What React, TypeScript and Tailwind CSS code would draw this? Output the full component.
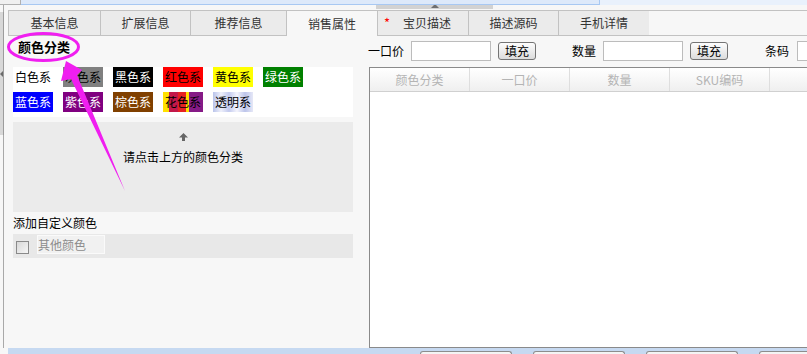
import React from 'react';

const swatches = [
  [
    { name: '白色系', bg: 'bg-white', text: 'text-black' },
    { name: '灰色系', bg: 'bg-[#808080]', text: 'text-black' },
    { name: '黑色系', bg: 'bg-black', text: 'text-white' },
    { name: '红色系', bg: 'bg-[#ff0000]', text: 'text-black' },
    { name: '黄色系', bg: 'bg-[#ffff00]', text: 'text-black' },
    { name: '绿色系', bg: 'bg-[#008000]', text: 'text-white' },
  ],
  [
    { name: '蓝色系', bg: 'bg-[#0000ff]', text: 'text-white' },
    { name: '紫色系', bg: 'bg-[#800080]', text: 'text-white' },
    { name: '棕色系', bg: 'bg-[#804000]', text: 'text-white' },
    {
      name: '花色系',
      bg: 'bg-[linear-gradient(90deg,#ffe000_0%,#ffe000_14%,#c3184a_14%,#c3184a_38%,#e52222_38%,#e52222_58%,#ffe000_58%,#ffe000_66%,#861a86_66%,#861a86_100%)]',
      text: 'text-black',
    },
    {
      name: '透明系',
      bg: 'bg-[linear-gradient(90deg,#b9c3ea_0%,#eef0fb_20%,#c3caee_40%,#f4f4fc_60%,#bcc4ea_80%,#e6e8f7_100%)]',
      text: 'text-black',
    },
  ],
];

const tabs = [
  { label: '基本信息', w: 'w-[93px] border-l' },
  { label: '扩展信息', w: 'w-[90px]' },
  { label: '推荐信息', w: 'w-[96px]' },
  { label: '销售属性', w: 'w-[91px]', active: true },
  { label: '宝贝描述', w: 'w-[91px]', star: true },
  { label: '描述源码', w: 'w-[90px]' },
  { label: '手机详情', w: 'w-[90px] border-r-0' },
];

const columns = ['颜色分类', '一口价', '数量', 'SKU编码', ''];

const FillButton: React.FC = () => (
  <button className="w-[38px] h-[18px] rounded-[3px] border border-[#747474] bg-[linear-gradient(#fdfdfd,#dcdcdc)] text-[12px] leading-[16px] text-black">
    填充
  </button>
);

const App: React.FC = () => {
  return (
    <div className="relative w-[807px] h-[354px] overflow-hidden bg-[#f7f7f7] text-[12px] text-[#222] font-['Noto_Sans_CJK_SC','Noto_Sans',sans-serif] flex flex-col">
      {/* top strip */}
      <div className="h-[5px] flex">
        <div className="w-[21px] shrink-0 h-[5px] bg-[#f0f0f0] border-r border-b border-[#b0b0b0]" />
        <div className="w-[579px] shrink-0 h-[5px] bg-[#dde9fa] border-r border-b border-[#a8c8f2]" />
        <div className="flex-1 h-[5px] bg-[#e9f1fc]" />
      </div>

      <div className="h-[343px] flex">
        {/* left gutter */}
        <div className="w-[8px] shrink-0 flex flex-col">
          <div className="w-[4px] h-[7px] border-r border-[#a9a9a9]" />
          <div className="w-[4px] h-[123px] bg-[#d8d8d8] border-r border-[#9c9c9c] flex flex-col pt-[59px]">
            <div className="w-0 h-0 border-y-[3px] border-y-transparent border-r-[3px] border-r-[#6a6a6a]" />
          </div>
          <div className="w-[4px] flex-1 border-r border-[#a9a9a9]" />
        </div>

        {/* main */}
        <div className="flex-1 min-w-0 overflow-hidden flex flex-col">
          <div className="h-[5px] pl-[368px]">
            <div className="w-[117px] h-[4px] bg-[#d2d2d2] flex justify-center">
              <div className="w-0 h-0 -mt-[1px] border-x-[4px] border-x-transparent border-b-[4px] border-b-[#707070]" />
            </div>
          </div>

          {/* tabs */}
          <div className="h-[26px] flex border-t border-[#c2c2c2]">
            {tabs.map((t) => (
              <div
                key={t.label}
                className={`${t.w} shrink-0 h-full border-r border-[#c2c2c2] flex items-center text-[12px] text-[#333] ${
                  t.active ? 'bg-[#f7f7f7]' : 'bg-[#ebebeb] border-b'
                } ${t.star ? 'pl-[6px]' : 'justify-center'}`}
              >
                {t.star && <span className="text-[#ff0000] mr-[13px] text-[13px]">*</span>}
                {t.label}
              </div>
            ))}
            <div className="flex-1 h-full border-b border-[#c2c2c2]" />
          </div>

          {/* content */}
          <div className="h-[312px] flex">
            {/* left panel */}
            <div className="w-[345px] shrink-0 pl-[5px] flex flex-col">
              <div className="h-[31px] pl-[5px] leading-[21px] text-[13px] font-bold text-black">颜色分类</div>
              <div className="bg-white flex flex-col gap-[5px] pb-[5px]">
                {swatches.map((row, i) => (
                  <div key={i} className="flex gap-[10px]">
                    {row.map((s) => (
                      <div key={s.name} className={`w-[40px] h-[20px] ${s.bg} ${s.text} text-[12px] leading-[20px] pl-[2px]`}>
                        {s.name}
                      </div>
                    ))}
                  </div>
                ))}
              </div>
              <div className="mt-[5px] h-[90px] bg-[#ebebeb] flex flex-col items-center pt-[11px]">
                <svg width="9" height="8" viewBox="0 0 9 8">
                  <path d="M4.5 0 L9 4.5 L6 4.5 L6 8 L3 8 L3 4.5 L0 4.5 Z" fill="#666" />
                </svg>
                <div className="mt-[9px] leading-[14px] text-[12px] text-black">请点击上方的颜色分类</div>
              </div>
              <div className="h-[22px] leading-[22px] text-[12px] text-black">添加自定义颜色</div>
              <div className="h-[24px] bg-[#e8e8e8] flex items-center pl-[3px]">
                <div className="w-[13px] h-[13px] border border-[#8a8a8a] bg-[linear-gradient(135deg,#d8d8d8,#f6f6f6)] mt-[2px]" />
                <div className="ml-[8px] w-[68px] h-[19px] -mt-[4px] bg-[#f1f1f1] border border-[#fafafa] text-[#8c8c8c] text-[12px] leading-[17px]">
                  其他颜色
                </div>
              </div>
            </div>

            {/* right panel */}
            <div className="ml-[15px] flex-1 min-w-0 flex flex-col pt-[5px]">
              <div className="h-[20px] flex items-center text-black text-[12px] whitespace-nowrap">
                <span className="w-[36px] shrink-0">一口价</span>
                <div className="ml-[7px] w-[80px] shrink-0 h-[20px] bg-white border border-[#bcbcbc]" />
                <div className="ml-[7px] shrink-0"><FillButton /></div>
                <span className="ml-[36px] w-[24px] shrink-0">数量</span>
                <div className="ml-[7px] w-[80px] shrink-0 h-[20px] bg-white border border-[#bcbcbc]" />
                <div className="ml-[7px] shrink-0"><FillButton /></div>
                <span className="ml-[37px] w-[24px] shrink-0">条码</span>
                <div className="ml-[8px] w-[80px] h-[20px] shrink-0 bg-white border border-[#bcbcbc]" />
              </div>
              <div className="mt-[6px] ml-[1px] h-[281px] bg-white border border-r-0 border-[#8a8a8a] flex flex-col">
                <div className="h-[24px] flex border-b border-[#d0d0d0] bg-[linear-gradient(#ffffff,#efefef)]">
                  {columns.map((c, i) => (
                    <div key={i} className="w-[100px] shrink-0 h-full border-r border-[#dedede] flex items-center justify-center text-[12px] text-[#b4b4b4]">
                      {c}
                    </div>
                  ))}
                </div>
              </div>
            </div>
          </div>
        </div>
      </div>

      {/* bottom band */}
      <div className="h-[6px] ml-[8px] bg-[#c6d9f1] flex pt-[3px] pl-[412px]">
        <div className="w-[92px] shrink-0 h-[3px] border border-b-0 border-[#8d8d8d] rounded-t-[3px] bg-[#f4f4f4]" />
        <div className="ml-[21px] w-[92px] shrink-0 h-[3px] border border-b-0 border-[#8d8d8d] rounded-t-[3px] bg-[#f4f4f4]" />
        <div className="ml-[21px] w-[92px] shrink-0 h-[3px] border border-b-0 border-[#8d8d8d] rounded-t-[3px] bg-[#f4f4f4]" />
        <div className="ml-[21px] w-[92px] shrink-0 h-[3px] border border-b-0 border-[#8d8d8d] rounded-t-[3px] bg-[#f4f4f4]" />
      </div>

      {/* magenta annotation */}
      <svg className="absolute left-0 top-0 pointer-events-none" width="807" height="354" viewBox="0 0 807 354">
        <ellipse cx="43.5" cy="47" rx="35" ry="13.5" fill="none" stroke="#f01ef0" strokeWidth="3" />
        <polygon points="66,61 82,70 77,75 125,191 71,79 61,81" fill="#f01ef0" />
      </svg>
    </div>
  );
};

export default App;
